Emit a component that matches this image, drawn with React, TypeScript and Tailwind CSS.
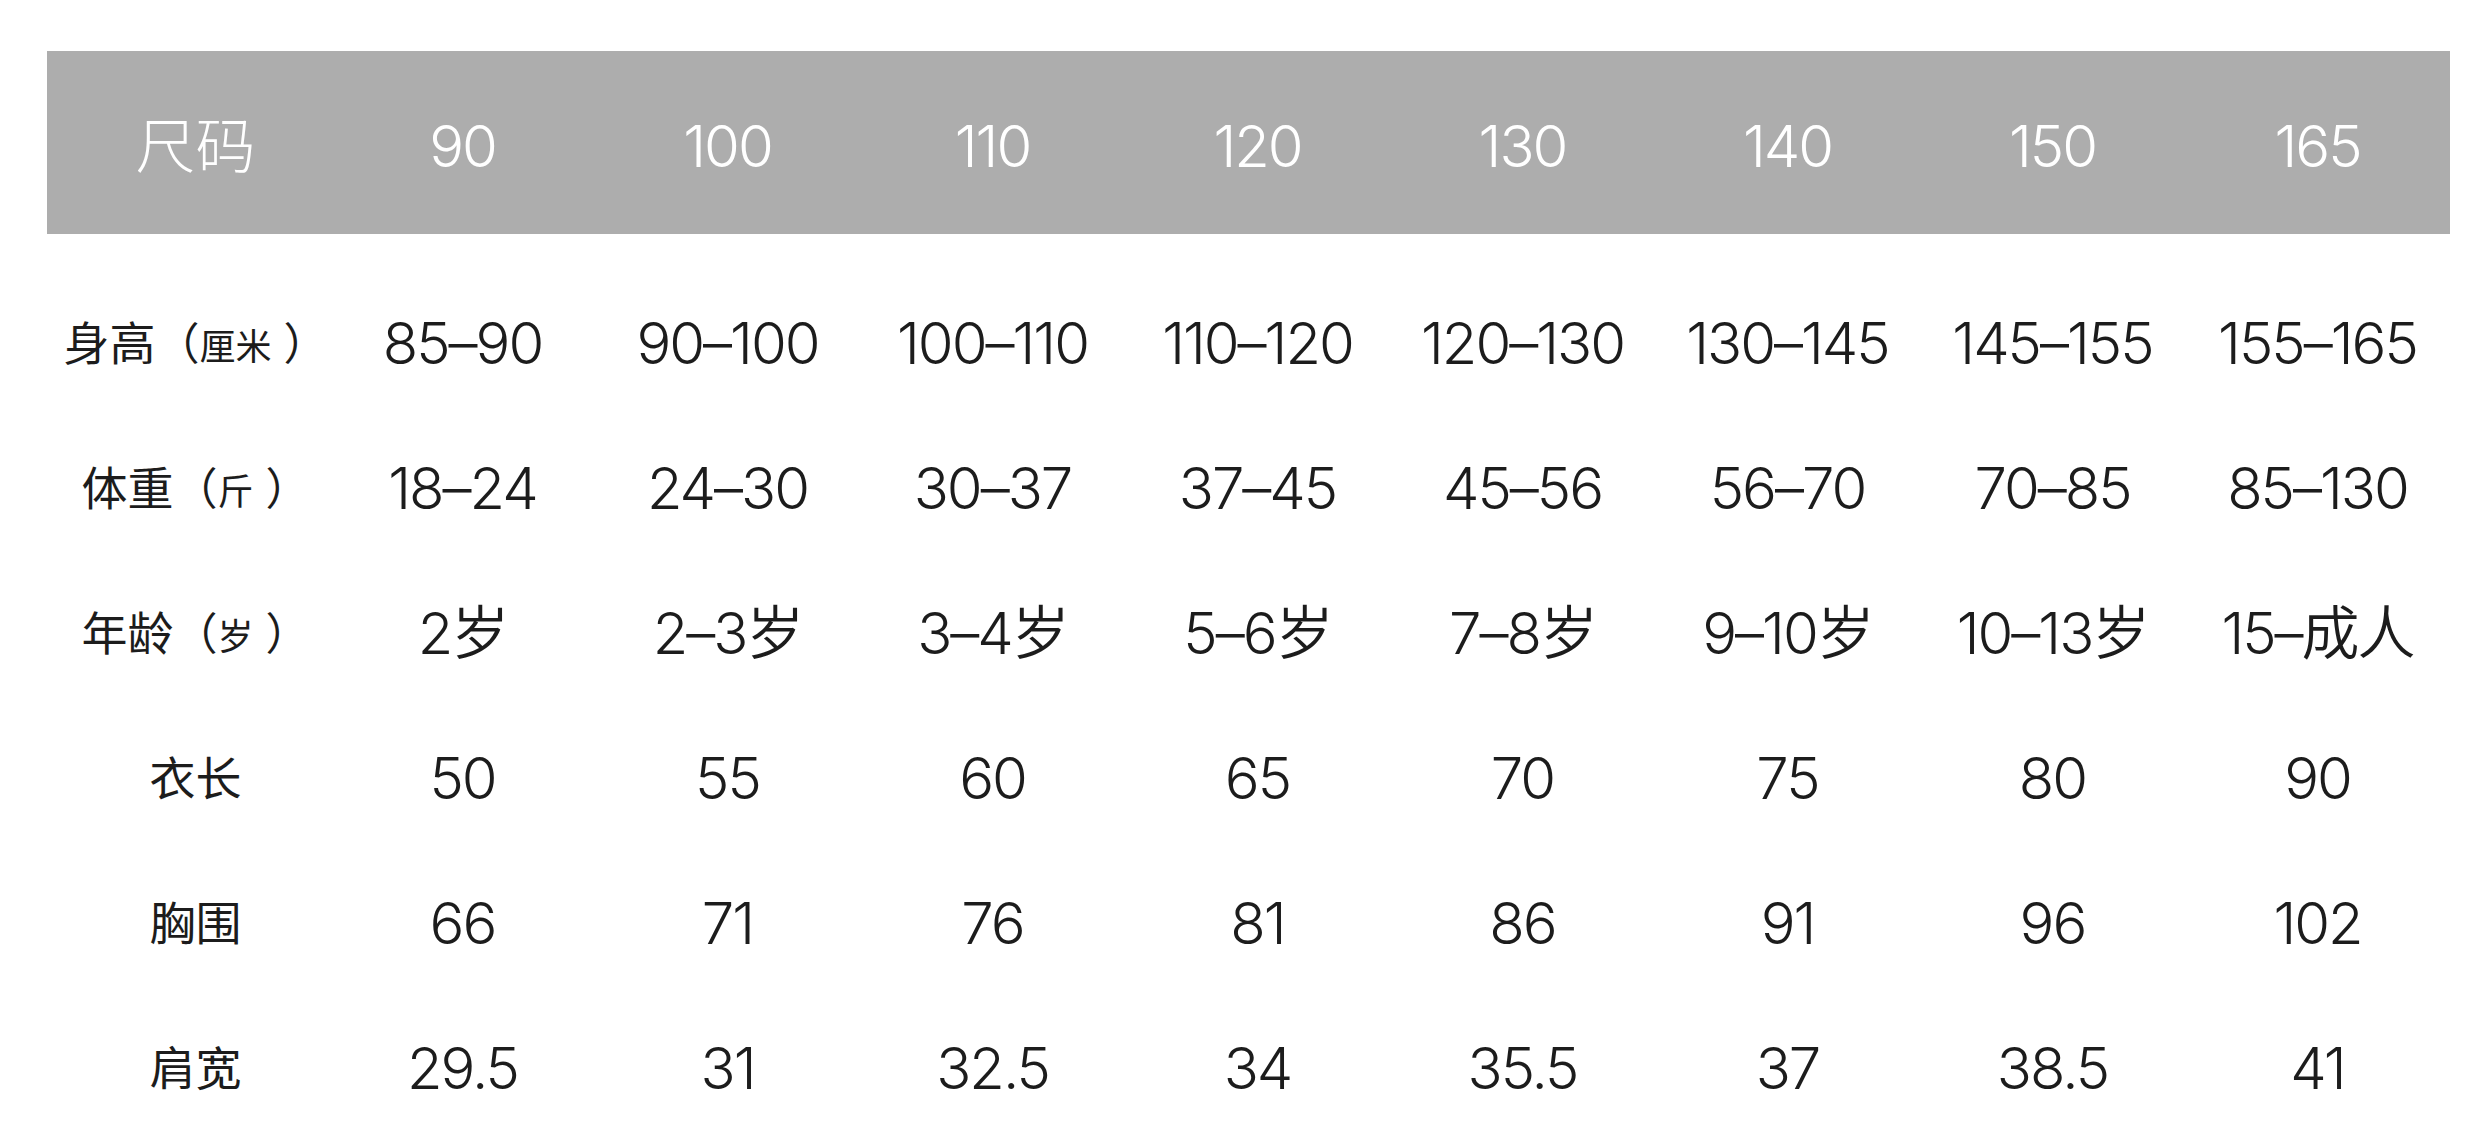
import React from "react";

const sizes = ["90", "100", "110", "120", "130", "140", "150", "165"];

type Row = { label: React.ReactNode; values: string[] };

function Unit({ children }: { children: React.ReactNode }) {
  return (
    <span className="text-[44px]">
      （<span className="text-[36px]">{children}</span>
      <span className="ml-[12px]">）</span>
    </span>
  );
}

const rows: Row[] = [
  {
    label: (
      <>
        身高<Unit>厘米</Unit>
      </>
    ),
    values: ["85–90", "90–100", "100–110", "110–120", "120–130", "130–145", "145–155", "155–165"],
  },
  {
    label: (
      <>
        体重<Unit>斤</Unit>
      </>
    ),
    values: ["18–24", "24–30", "30–37", "37–45", "45–56", "56–70", "70–85", "85–130"],
  },
  {
    label: (
      <>
        年龄<Unit>岁</Unit>
      </>
    ),
    values: ["2岁", "2–3岁", "3–4岁", "5–6岁", "7–8岁", "9–10岁", "10–13岁", "15–成人"],
  },
  { label: "衣长", values: ["50", "55", "60", "65", "70", "75", "80", "90"] },
  { label: "胸围", values: ["66", "71", "76", "81", "86", "91", "96", "102"] },
  { label: "肩宽", values: ["29.5", "31", "32.5", "34", "35.5", "37", "38.5", "41"] },
];

export default function App() {
  return (
    <div className="w-[2480px] h-[1148px] overflow-hidden bg-white pl-[47px] pr-[30px] pt-[51px] font-[Inter,'Noto_Sans_CJK_SC',sans-serif] text-[#1c1c1c]">
      <div className="grid h-[183px] grid-cols-[283px_repeat(8,1fr)] items-center bg-[#adadad] pt-[6px] text-white font-light">
        <div className="pl-[14px] text-center text-[60px] leading-none">尺码</div>
        {sizes.map((s) => (
          <div key={s} className="text-center text-[58px] leading-none tracking-[-2px]">
            {s}
          </div>
        ))}
      </div>
      <div className="pt-[36px]">
        {rows.map((r, i) => (
          <div key={i} className="grid h-[145px] grid-cols-[283px_repeat(8,1fr)] items-center">
            <div className="pl-[14px] text-center text-[46px] leading-none whitespace-nowrap">{r.label}</div>
            {r.values.map((v, j) => (
              <div key={j} className="text-center text-[58px] leading-none tracking-[-2px] whitespace-nowrap [font-weight:350]">
                {v}
              </div>
            ))}
          </div>
        ))}
      </div>
    </div>
  );
}
